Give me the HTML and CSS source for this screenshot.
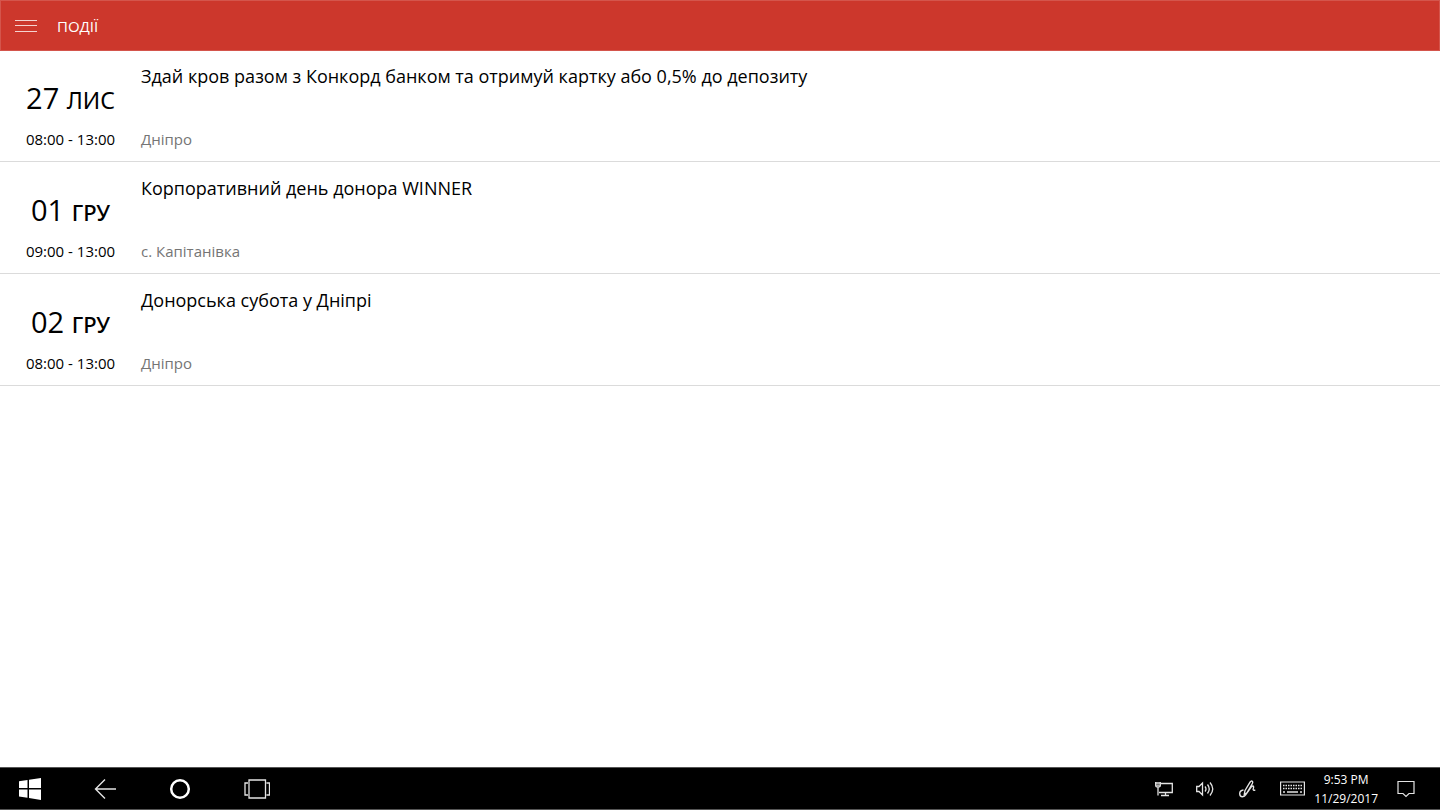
FILE: index.html
```
<!DOCTYPE html>
<html lang="uk">
<head>
<meta charset="utf-8">
<meta name="viewport" content="width=device-width, initial-scale=1">
<title>Події</title>
<link rel="stylesheet" href="styles.css">
</head>
<body>
<header class="topbar">
  <button class="menu-button" type="button" aria-label="Меню">
    <svg width="22" height="14" viewBox="0 0 22 14" stroke="#f5d3d0" stroke-width="1.200"><path d="M0 1.500H22M0 6.500H22M0 12.500H22"/></svg>
  </button>
  <h1 class="page-title">ПОДІЇ</h1>
</header>
<main class="events">
  <article class="event">
    <div class="when"><div class="date">27 <span class="month month-wide">лис</span></div><div class="time">08:00 - 13:00</div></div>
    <div class="details"><h2 class="event-title">Здай кров разом з Конкорд банком та отримуй картку або 0,5% до депозиту</h2><p class="place">Дніпро</p></div>
  </article>
  <article class="event">
    <div class="when"><div class="date">01 <span class="month">ГРУ</span></div><div class="time">09:00 - 13:00</div></div>
    <div class="details"><h2 class="event-title">Корпоративний день донора WINNER</h2><p class="place">с. Капітанівка</p></div>
  </article>
  <article class="event">
    <div class="when"><div class="date">02 <span class="month">ГРУ</span></div><div class="time">08:00 - 13:00</div></div>
    <div class="details"><h2 class="event-title">Донорська субота у Дніпрі</h2><p class="place">Дніпро</p></div>
  </article>
</main>
<footer class="taskbar">
  <nav class="task-buttons">
    <button type="button" aria-label="Start"><svg width="22" height="22" viewBox="0 0 22 22" fill="#fff"><path d="M0 3.200L8.500 2V10H0ZM10 1.700L22 0V10H10ZM0 11.500H8.500V19.700L0 18.500ZM10 11.500H22V22L10 20Z"/></svg></button>
    <button type="button" aria-label="Back"><svg width="22" height="22" viewBox="0 0 22 22" fill="none" stroke="#e4e4e4" stroke-width="1.400"><path d="M11 1.500L1.500 11L11 20.500M1.500 11H22"/></svg></button>
    <button type="button" aria-label="Search"><svg width="22" height="22" viewBox="0 0 22 22" fill="none" stroke="#fff" stroke-width="2.500"><circle cx="11" cy="11" r="8.800"/></svg></button>
    <button type="button" aria-label="Task view"><svg width="26" height="22" viewBox="0 0 26 22" fill="none" stroke="#e4e4e4" stroke-width="1.300"><path d="M5 2H21.500V20H5ZM4 5H1V17H4M22.500 5H25.500V17H22.500"/></svg></button>
  </nav>
  <div class="tray">
    <button type="button" aria-label="Network"><svg width="18" height="16" viewBox="0 0 18 16" fill="none" stroke="#e4e4e4" stroke-width="1.300"><path d="M6 2.500H17.300V11.500H4M10.500 11.500V14.500M6 14.500H14M.700 1V4.500Q.700 6 3 6T5.300 4.500V1M.700 2H5.300M1.500 4.200H4.500M3 6V14.500"/></svg></button>
    <button type="button" aria-label="Volume"><svg width="18" height="16" viewBox="0 0 18 16" fill="none" stroke="#e4e4e4" stroke-width="1.300"><path d="M.700 5.500H3L6.500 2V14L3 10.500H.700ZM9 5.500Q11 8 9 10.500M11.500 3.500Q15 8 11.500 12.500M14 1.500Q19.500 8 14 14.500"/></svg></button>
    <button type="button" aria-label="Ink workspace"><svg width="20" height="18" viewBox="0 0 20 18" fill="none" stroke="#e4e4e4" stroke-width="1.400"><path d="M8 10.500L13.200 2Q14.200 .500 15.300 1.300Q16.200 2.100 15.400 3.500L10 12.800L7.300 14.500ZM6.500 10Q2.800 10.500 2.700 13.500Q2.700 16.700 5.500 16.800Q7.700 16.800 8.800 14.700L14.500 6.500Q17.500 5 16.300 8.500Q15.500 10.500 18.300 10.300"/></svg></button>
    <button type="button" aria-label="Keyboard"><svg width="25" height="15" viewBox="0 0 25 15" fill="none" stroke="#e4e4e4" stroke-width="1.200"><path d="M.600 1H24.400V14H.600Z"/><path d="M3 4.500H22M3 7.500H22" stroke-width="1.500" stroke-dasharray="1.500 1"/><path d="M3 11H5M7 11H18M20 11H22" stroke-width="1.500"/></svg></button>
    <div class="clock"><span>9:53 PM</span><span>11/29/2017</span></div>
    <button type="button" aria-label="Notifications"><svg width="18" height="18" viewBox="0 0 18 18" fill="none" stroke="#e4e4e4" stroke-width="1.200"><path d="M1 1.500H17V13.500H12L9 16.500L6 13.500H1Z"/></svg></button>
  </div>
</footer>
</body>
</html>
```
FILE: styles.css
```
* { box-sizing: border-box; }
body {
  margin: 0;
  min-height: 100vh;
  display: flex;
  flex-direction: column;
  background: #fff;
  color: #000;
  font-family: "Open Sans", "Noto Sans", sans-serif;
}
button { border: 0; padding: 0; background: none; display: flex; align-items: center; justify-content: center; }
svg { display: block; }
.topbar {
  display: flex;
  align-items: center;
  min-height: 51px;
  gap: 20px;
  padding: 0 14px;
  background: #cc372c;
  border: 1px solid #d4554c;
}
.page-title { margin: 0; font-size: 15px; line-height: 20px; font-weight: 400; color: #fff; }
.events { flex: 1; margin-top: -1px; }
.event {
  display: grid;
  grid-template-columns: 141px 1fr;
  min-height: 112px;
  padding: 12px 0 11px;
  border-bottom: 1px solid #dbdbdb;
}
.when { display: flex; flex-direction: column; justify-content: flex-end; text-align: center; gap: 8px; }
.date { font-size: 29px; line-height: 40px; }
.month { font-family: "Noto Sans", sans-serif; font-size: 22px; font-weight: 500; }
.month-wide { font-size: 23px; font-weight: 400; text-transform: uppercase; }
.time { font-size: 15px; line-height: 22px; }
.details { display: flex; flex-direction: column; justify-content: space-between; }
.event-title { margin: 0; font-size: 18px; line-height: 28px; font-weight: 400; }
.place { margin: 0; font-size: 15px; line-height: 22px; color: #757575; }
.taskbar {
  display: flex;
  align-items: center;
  justify-content: space-between;
  min-height: 43px;
  padding: 0 25px 0 19px;
  background: #000;
  border-top: 1px solid #555;
  border-bottom: 1px solid #555;
  color: #fff;
}
.task-buttons { display: flex; align-items: center; gap: 53px; }
.tray { display: flex; align-items: center; gap: 23px; }
.clock { display: flex; flex-direction: column; text-align: center; margin: 0 -4px 0 -14px; font-size: 12px; line-height: 19px; }
```
